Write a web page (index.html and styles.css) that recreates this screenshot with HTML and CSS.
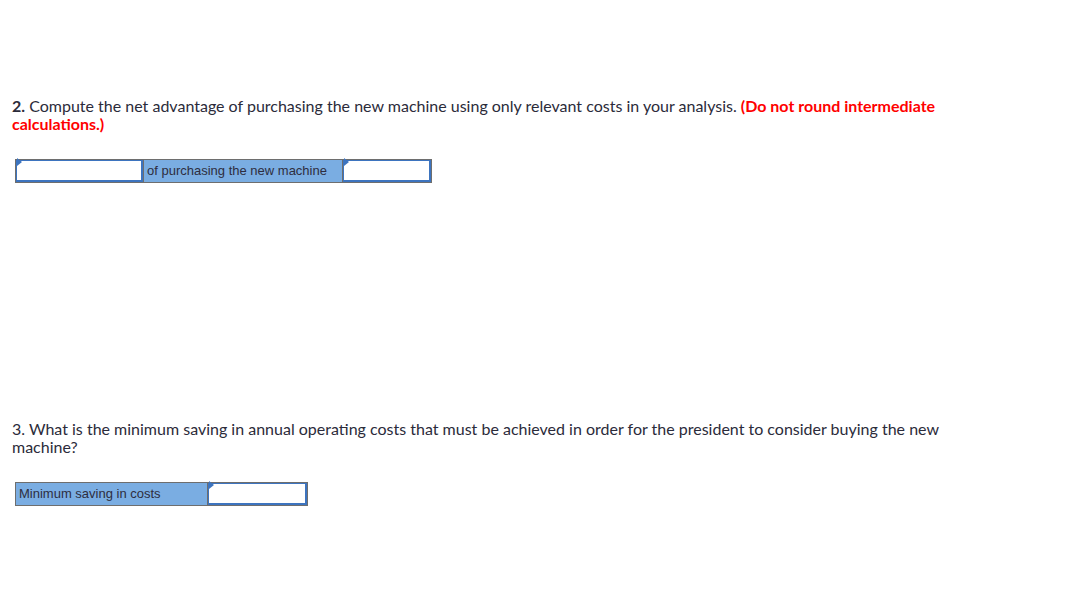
FILE: index.html
```html
<!DOCTYPE html>
<html lang="en">
<head>
    <meta charset="UTF-8">
    <title>Question</title>
    <link rel="stylesheet" href="styles.css">
</head>
<body>
    <div class="page">
        <p class="question q2"><b>2.</b> Compute the net advantage of purchasing the new machine using only relevant costs in your analysis. <span class="note">(Do not round intermediate calculations.)</span></p>
        <div class="answer-row">
            <div class="cell input w127"><span class="mark"></span></div>
            <div class="cell label w199">of purchasing the new machine</div>
            <div class="cell input w88"><span class="mark"></span></div>
        </div>

        <p class="question q3">3. What is the minimum saving in annual operating costs that must be achieved in order for the president to consider buying the new machine?</p>
        <div class="answer-row">
            <div class="cell label w191">Minimum saving in costs</div>
            <div class="cell input w99"><span class="mark"></span></div>
        </div>
    </div>
</body>
</html>
```

FILE: styles.css
```css
body {
    margin: 0;
    background: #fff;
    font-family: Lato, "Open Sans", sans-serif;
    color: #2b2b3a;
}
.page {
    padding: 0 12px;
}
.question {
    font-size: 16px;
    line-height: 18px;
    margin: 0;
    width: 935px;
}
.q2 {
    padding-top: 97px;
}
.q3 {
    padding-top: 237px;
}
.note {
    color: #f00;
    font-weight: bold;
}
.answer-row {
    display: flex;
    width: max-content;
    margin-left: 3px;
    margin-top: 26px;
    border: 1px solid #6e6e6e;
    background: #6e6e6e;
    gap: 1px;
}
.q3 + .answer-row {
    margin-top: 26px;
}
.cell {
    height: 22px;
    box-sizing: border-box;
    position: relative;
}
.input {
    background: #fff;
    border: 1px solid #3d74bf;
    border-width: 1px 2px 2px 1px;
}
.label {
    background: #7aade2;
    font-family: Arial, "Liberation Sans", sans-serif;
    font-size: 13px;
    line-height: 22px;
    padding-left: 3px;
    color: #2e2e40;
}
.mark {
    position: absolute;
    left: 0;
    top: -3px;
    width: 0;
    height: 0;
    border-top: 4px solid transparent;
    border-bottom: 4px solid transparent;
    border-left: 5px solid #3d74bf;
}
.w127 { width: 127px; }
.w199 { width: 198px; }
.w88 { width: 88px; }
.w191 { width: 191px; }
.w99 { width: 99px; }
```
